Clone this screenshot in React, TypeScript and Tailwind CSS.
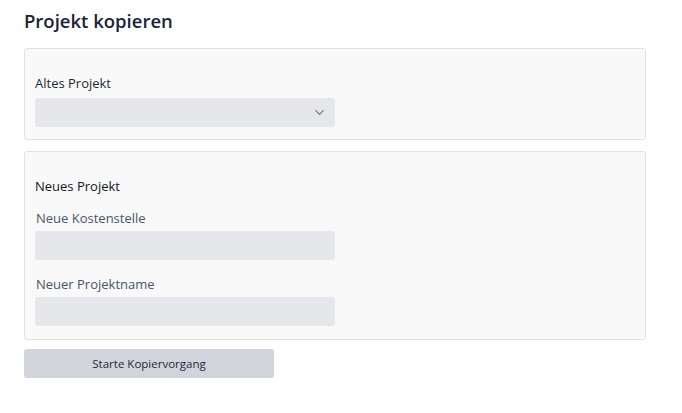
import { ChevronDown } from "lucide-react";

const font = { fontFamily: '"Open Sans", "Noto Sans", sans-serif' };

function Field({ label }: { label: string }) {
  return (
    <div className="flex flex-col">
      <label className="text-[13px] leading-5 text-[#4a5568] pl-[1px]">{label}</label>
      <input className="mt-[3px] h-[29px] w-[300px] rounded-[3px] bg-[#e5e7eb] outline-none" />
    </div>
  );
}

export default function App() {
  return (
    <div className="min-h-screen bg-white px-6" style={font}>
      <h1 className="pt-[7px] text-[18.5px] leading-7 font-semibold text-[#1c2237]">Projekt kopieren</h1>

      <div className="mt-[13px] w-[622px] rounded-[3px] border border-[#e2e2e2] bg-[#f9f9f9] px-[10px] pt-[24px] pb-[12px]">
        <div className="text-[13px] leading-5 text-[#1f2937]">Altes Projekt</div>
        <div className="relative mt-[5px] flex h-[29px] w-[300px] items-center justify-end rounded-[3px] bg-[#e5e7eb] pr-[8px]">
          <ChevronDown size={15} strokeWidth={1.75} className="text-[#6b7280]" />
        </div>
      </div>

      <div className="mt-[11px] flex w-[622px] flex-col rounded-[3px] border border-[#e2e2e2] bg-[#f9f9f9] px-[10px] pt-[24px] pb-[13px]">
        <div className="text-[13px] leading-5 text-[#111827]">Neues Projekt</div>
        <div className="mt-3">
          <Field label="Neue Kostenstelle" />
        </div>
        <div className="mt-[14px]">
          <Field label="Neuer Projektname" />
        </div>
      </div>

      <button className="mt-[9px] h-[29px] w-[250px] rounded-[3px] bg-[#d1d5db] text-[11.5px] text-[#1f2937]">
        Starte Kopiervorgang
      </button>
    </div>
  );
}
